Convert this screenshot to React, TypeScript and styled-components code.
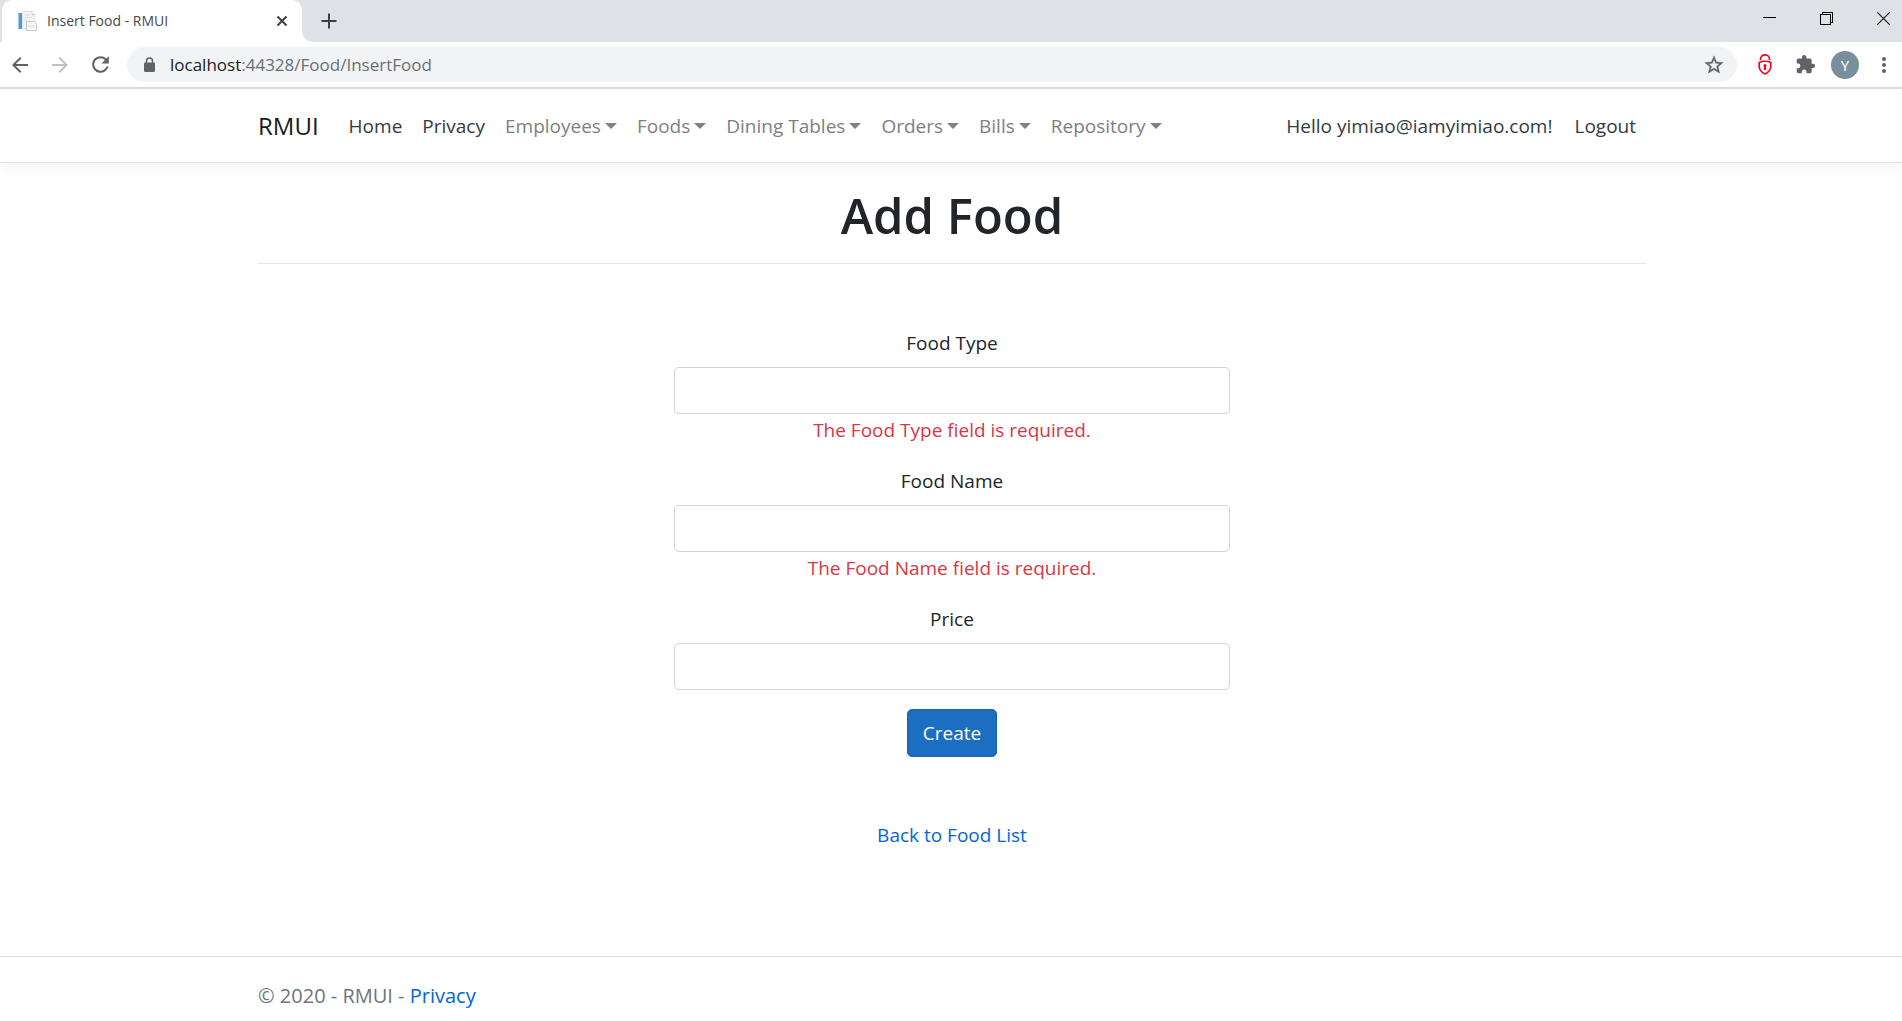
import React from "react";
import styled, { createGlobalStyle } from "styled-components";

const GlobalStyle = createGlobalStyle`
  *, *::before, *::after { box-sizing: border-box; }
  body {
    margin: 0;
    background: #fff;
    color: #212529;
    font-family: "Segoe UI", "Open Sans", "Noto Sans", sans-serif;
    font-size: 19px;
    line-height: 30px;
  }
  a { text-decoration: none; }
  button, input { font: inherit; }
`;

const Page = styled.div`
  display: flex;
  flex-direction: column;
  min-height: 100vh;
`;

/* Browser frame */

const TabStrip = styled.div`
  display: flex;
  align-items: stretch;
  height: 42px;
  padding-left: 2px;
  background: #dee1e6;
`;

const Tab = styled.div`
  position: relative;
  display: flex;
  align-items: center;
  width: 300px;
  padding: 0 10px 0 15px;
  border-radius: 10px 10px 0 0;
  background: #fff;
  &::after {
    content: "";
    position: absolute;
    left: 100%;
    bottom: 0;
    width: 10px;
    height: 10px;
    background: radial-gradient(circle at 100% 0, transparent 9px, #fff 10px);
  }
`;

const TabTitle = styled.span`
  flex: 1;
  margin-left: 10px;
  font-size: 14px;
  line-height: 20px;
  color: #45494d;
`;

const IconButton = styled.button<{ $w: number }>`
  display: flex;
  align-items: center;
  justify-content: center;
  flex: none;
  width: ${(p) => p.$w}px;
  padding: 0;
  border: 0;
  background: transparent;
  color: #5f6368;
  svg { display: block; }
`;

const NewTab = styled(IconButton)`
  margin-left: 7px;
`;

const WindowControls = styled.div`
  display: flex;
  gap: 37px;
  margin-left: auto;
  padding: 0 9px 6px 0;
`;

const Toolbar = styled.div`
  display: flex;
  align-items: center;
  height: 47px;
  border-bottom: 2px solid #dadce0;
  background: #fff;
`;

const AddressBar = styled.div`
  display: flex;
  align-items: center;
  flex: 1;
  height: 35px;
  margin-left: 7px;
  padding: 0 3px 0 16px;
  border-radius: 18px;
  background: #f1f3f4;
`;

const Url = styled.span`
  flex: 1;
  margin-left: 14px;
  font-size: 17px;
  line-height: 24px;
  color: #6b6f74;
  b { font-weight: 400; color: #202124; }
`;

const Extensions = styled.div`
  display: flex;
  align-items: center;
  padding-left: 8px;
`;

const Avatar = styled.span`
  display: flex;
  align-items: center;
  justify-content: center;
  width: 28px;
  height: 28px;
  border-radius: 50%;
  background: #78909c;
  color: #fff;
  font-size: 15px;
  line-height: 20px;
`;

/* Web page */

const Container = styled.div`
  width: 100%;
  max-width: 1426px;
  margin: 0 auto;
  padding: 0 18px 0 20px;
`;

const Header = styled.header`
  padding: 10px 0;
  border-bottom: 1px solid #dee2e6;
  box-shadow: 0 5px 15px rgba(0, 0, 0, 0.05);
`;

const NavBar = styled(Container)`
  display: flex;
  align-items: center;
  min-height: 53px;
`;

const Brand = styled.a`
  margin-right: 20px;
  font-size: 24px;
  line-height: 38px;
  color: #1a1a1a;
`;

const Menu = styled.ul`
  display: flex;
  flex: 1;
  margin: 0;
  padding: 0;
  list-style: none;
`;

const NavLink = styled.a`
  display: block;
  padding: 10px;
  color: #343a40;
`;

const NavToggle = styled.button`
  display: flex;
  align-items: center;
  gap: 4px;
  padding: 10px;
  border: 0;
  background: transparent;
  color: #808080;
  &::after {
    content: "";
    border: 6px solid transparent;
    border-top-color: currentColor;
    border-bottom: 0;
  }
`;

const Account = styled.div`
  display: flex;
  align-items: center;
`;

const Greeting = styled.span`
  padding: 0 12px;
  color: #343a40;
`;

const Main = styled.main`
  flex: 1;
  padding: 20px 0 40px;
  text-align: center;
`;

const Title = styled.h1`
  margin: 0 0 16px;
  font-size: 49px;
  font-weight: 600;
  line-height: 64px;
`;

const Divider = styled.hr`
  margin: 0;
  border: 0;
  border-top: 1px solid #e5e5e5;
`;

const Form = styled.form`
  width: 40%;
  margin: 63px auto 0;
`;

const Field = styled.div`
  display: flex;
  flex-direction: column;
  margin-bottom: 19px;
`;

const Label = styled.label`
  margin-bottom: 8px;
  line-height: 32px;
`;

const TextInput = styled.input`
  width: 100%;
  height: 47px;
  padding: 8px 15px;
  border: 1px solid #ced4da;
  border-radius: 5px;
  background: #fff;
  color: #495057;
`;

const FieldError = styled.span`
  line-height: 32px;
  color: #dc3545;
`;

const Submit = styled.button`
  height: 48px;
  padding: 0 15px;
  border: 1px solid #1861ac;
  border-radius: 5px;
  background: #1b6ec2;
  color: #fff;
`;

const TextLink = styled.a`
  color: #0366d6;
`;

const BackRow = styled.div`
  margin-top: 63px;
`;

const Footer = styled.footer`
  padding: 24px 0 10px;
  border-top: 1px solid #dee2e6;
  font-size: 20px;
  color: #6c757d;
`;

const fields = [
  { id: "foodType", label: "Food Type", error: "The Food Type field is required." },
  { id: "foodName", label: "Food Name", error: "The Food Name field is required." },
  { id: "price", label: "Price", error: "" },
];

const menus = ["Employees", "Foods", "Dining Tables", "Orders", "Bills", "Repository"];

function PageIcon() {
  return (
    <svg width="20" height="20" viewBox="0 0 20 20">
      <path d="M1 2h4v16H1z" fill="#4c9fd4" />
      <path d="M1 2h1v16H1z" fill="#9ccbe6" />
      <path d="M5.500 .5h9.500l3 3v14.500H5.500z" fill="#f4f5f6" stroke="#dfe2e5" />
      <path d="M15 .5v3h3" fill="#fff" stroke="#c9cdd2" />
      <path d="M7.500 4h5M7.500 6.500h8M7.500 9h3" stroke="#d8dbe0" />
      <path d="M9.500 10.500h7.500l2.500 2v7h-10z" fill="#fafafa" stroke="#c3c8d2" />
      <path d="M11 14.500h7v2h-7z" fill="#e2e5ea" />
    </svg>
  );
}

function BrowserFrame() {
  return (
    <div>
      <TabStrip>
        <Tab>
          <PageIcon />
          <TabTitle>Insert Food - RMUI</TabTitle>
          <IconButton $w={20} aria-label="Close tab">
            <svg width="12" height="12" viewBox="0 0 12 12" stroke="#3c4043" strokeWidth="2">
              <path d="M1.500 1.500l9 9M10.500 1.500l-9 9" />
            </svg>
          </IconButton>
        </Tab>
        <NewTab $w={40} aria-label="New tab">
          <svg width="16" height="16" viewBox="0 0 16 16" stroke="#3c4043" strokeWidth="2">
            <path d="M8 .5v15M.5 8h15" />
          </svg>
        </NewTab>
        <WindowControls>
          <IconButton $w={20} aria-label="Minimize">
            <svg width="13" height="13" viewBox="0 0 13 13" stroke="#000" shapeRendering="crispEdges">
              <path d="M0 5.500h13" />
            </svg>
          </IconButton>
          <IconButton $w={20} aria-label="Restore">
            <svg width="13" height="13" viewBox="0 0 13 13" fill="none" stroke="#000" shapeRendering="crispEdges">
              <path d="M.5 2.500h10v10H.5zM2.500 2.500v-2h10v10h-2" />
            </svg>
          </IconButton>
          <IconButton $w={20} aria-label="Close window">
            <svg width="13" height="13" viewBox="0 0 13 13" stroke="#111" strokeWidth="1.100">
              <path d="M.3 .3l12.400 12.400M12.700 .3L.3 12.700" />
            </svg>
          </IconButton>
        </WindowControls>
      </TabStrip>
      <Toolbar>
        <IconButton $w={40} aria-label="Back">
          <svg width="24" height="24" viewBox="0 0 24 24" fill="currentColor">
            <path d="M20 11H7.830l5.590-5.590L12 4l-8 8 8 8 1.410-1.410L7.830 13H20z" />
          </svg>
        </IconButton>
        <IconButton $w={40} aria-label="Forward">
          <svg width="24" height="24" viewBox="0 0 24 24" fill="#bdc1c6">
            <path d="M12 4l-1.410 1.410L16.170 11H4v2h12.170l-5.580 5.590L12 20l8-8z" />
          </svg>
        </IconButton>
        <IconButton $w={40} aria-label="Reload">
          <svg width="25" height="25" viewBox="0 0 24 24" fill="currentColor">
            <path d="M17.650 6.350A7.960 7.960 0 0 0 12 4a8 8 0 1 0 7.730 10h-2.080A6 6 0 1 1 12 6c1.660 0 3.140.690 4.220 1.780L13 11h7V4z" />
          </svg>
        </IconButton>
        <AddressBar>
          <svg width="13" height="16" viewBox="0 0 13 16">
            <path d="M3.500 6V4a3 3 0 0 1 6 0v2" fill="none" stroke="#5f6368" strokeWidth="1.500" />
            <rect x="1" y="5.500" width="11" height="9.500" rx="1.300" fill="#5f6368" />
          </svg>
          <Url>
            <b>localhost</b>:44328/Food/InsertFood
          </Url>
          <IconButton $w={40} aria-label="Bookmark this page">
            <svg width="22" height="22" viewBox="0 0 24 24" fill="currentColor" stroke="currentColor" strokeWidth=".4">
              <path d="M22 9.240l-7.190-.620L12 2 9.190 8.630 2 9.240l5.460 4.730L5.820 21 12 17.270 18.180 21l-1.630-7.030zM12 15.400l-3.760 2.270 1-4.280-3.320-2.880 4.380-.380L12 6.100l1.710 4.040 4.380.380-3.320 2.880 1 4.280z" />
            </svg>
          </IconButton>
        </AddressBar>
        <Extensions>
          <IconButton $w={40} aria-label="Password manager">
            <svg width="14" height="21" viewBox="0 0 14 21" fill="none" stroke="#f5051f" strokeWidth="1.700">
              <path d="M2.500 6.300V5a4.500 4.200 0 0 1 9 0v1.300" />
              <path d="M1.200 8.500Q7 6 12.800 8.500v4.500Q12.300 17.500 7 20 1.700 17.500 1.200 13z" />
              <path d="M7 12v4" strokeWidth="2" />
              <circle cx="7" cy="11.500" r=".7" />
            </svg>
          </IconButton>
          <IconButton $w={40} aria-label="Extensions">
            <svg width="21" height="21" viewBox="0 0 24 24" fill="currentColor">
              <path d="M20.500 11H19V7c0-1.100-.9-2-2-2h-4V3.500a2.500 2.500 0 0 0-5 0V5H4c-1.100 0-1.990.9-1.990 2v3.800H3.500a2.700 2.700 0 0 1 0 5.400H2V20c0 1.100.9 2 2 2h3.800v-1.500a2.700 2.700 0 0 1 5.400 0V22H17c1.100 0 2-.9 2-2v-4h1.500a2.500 2.500 0 0 0 0-5z" />
            </svg>
          </IconButton>
          <IconButton $w={40} aria-label="Profile">
            <Avatar>Y</Avatar>
          </IconButton>
          <IconButton $w={37} aria-label="Browser menu">
            <svg width="4" height="18" viewBox="0 0 4 18" fill="currentColor">
              <circle cx="2" cy="3" r="2" />
              <circle cx="2" cy="9" r="2" />
              <circle cx="2" cy="15" r="2" />
            </svg>
          </IconButton>
        </Extensions>
      </Toolbar>
    </div>
  );
}

export default function App() {
  return (
    <Page>
      <GlobalStyle />
      <BrowserFrame />
      <Header>
        <NavBar as="nav">
          <Brand href="#">RMUI</Brand>
          <Menu>
            <li><NavLink href="#">Home</NavLink></li>
            <li><NavLink href="#">Privacy</NavLink></li>
            {menus.map((name) => (
              <li key={name}><NavToggle type="button">{name}</NavToggle></li>
            ))}
          </Menu>
          <Account>
            <Greeting>Hello yimiao@iamyimiao.com!</Greeting>
            <NavLink href="#">Logout</NavLink>
          </Account>
        </NavBar>
      </Header>
      <Main>
        <Container>
          <Title>Add Food</Title>
          <Divider />
          <Form onSubmit={(e: React.FormEvent) => e.preventDefault()}>
            {fields.map((f) => (
              <Field key={f.id}>
                <Label htmlFor={f.id}>{f.label}</Label>
                <TextInput id={f.id} name={f.id} type="text" />
                {f.error && <FieldError>{f.error}</FieldError>}
              </Field>
            ))}
            <Submit type="submit">Create</Submit>
          </Form>
          <BackRow>
            <TextLink href="#">Back to Food List</TextLink>
          </BackRow>
        </Container>
      </Main>
      <Footer>
        <Container>
          © 2020 - RMUI - <TextLink href="#">Privacy</TextLink>
        </Container>
      </Footer>
    </Page>
  );
}
